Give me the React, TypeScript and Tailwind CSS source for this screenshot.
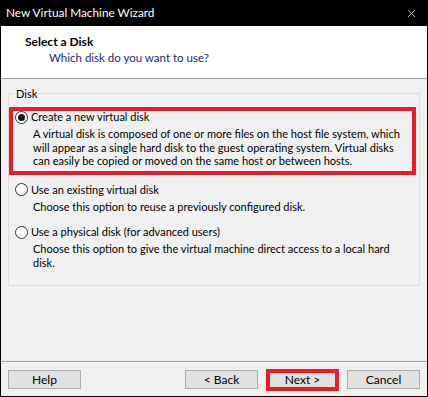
import { X } from "lucide-react";

const font = { fontFamily: 'Lato, "Noto Sans", sans-serif' };

function Radio({ checked }: { checked?: boolean }) {
  return (
    <span className="flex h-[13px] w-[13px] shrink-0 items-center justify-center rounded-full border border-[#333] bg-white">
      {checked && <span className="h-[7px] w-[7px] rounded-full bg-[#1a1a1a]" />}
    </span>
  );
}

function Option({
  label,
  desc,
  checked,
}: {
  label: string;
  desc: string[];
  checked?: boolean;
}) {
  return (
    <div className="flex flex-col">
      <div className="flex h-[12px] items-center gap-[3px]">
        <Radio checked={checked} />
        <span className="leading-[12px]">{label}</span>
      </div>
      <div className="ml-[18px] mt-[4px] leading-[13.5px]">
        {desc.map((d) => (
          <div key={d}>{d}</div>
        ))}
      </div>
    </div>
  );
}

function Btn({ children, red }: { children: string; red?: boolean }) {
  return (
    <button
      className={
        red
          ? "-mt-px h-[22px] w-[73px] border-4 border-[#ed1c24] bg-[#e1e1e1] text-[12px] leading-none text-black"
          : "h-[19px] w-[73px] border border-[#adadad] bg-[#e1e1e1] text-[12px] leading-none text-black"
      }
    >
      {children}
    </button>
  );
}

export default function App() {
  return (
    <div className="flex h-[397px] w-[428px] flex-col overflow-hidden whitespace-nowrap bg-[#f0f0f0] text-[11px] text-black" style={font}>
      {/* title bar */}
      <div className="flex h-[26px] shrink-0 items-center justify-between bg-black pl-[6px] pr-[10px] text-white">
        <span className="text-[11.8px]">New Virtual Machine Wizard</span>
        <X size={13} strokeWidth={1.3} />
      </div>
      <div className="flex flex-1 flex-col border-x border-b border-black">
        {/* header */}
        <div className="flex h-[53px] shrink-0 flex-col border-b border-[#a0a0a0] bg-white pl-[24px] pt-[8px]">
          <div className="text-[12px] font-bold leading-[16px]">Select a Disk</div>
          <div className="ml-[24px] text-[11.5px] leading-[16px] text-[#1c2b6e]">
            Which disk do you want to use?
          </div>
        </div>
        {/* body */}
        <div className="flex-1 px-[7px] pt-[8px]">
          <fieldset className="w-[412px] border border-[#dcdcdc] pb-[16px] pr-[3px]">
            <legend className="ml-[5px] px-[2px] leading-[13px]">Disk</legend>
            <div className="mt-[7px] flex flex-col">
              <div className="w-[407px] border-4 border-[#ed1c24] pb-[3px] pl-[2px]">
                <Option
                  checked
                  label="Create a new virtual disk"
                  desc={[
                    "A virtual disk is composed of one or more files on the host file system, which",
                    "will appear as a single hard disk to the guest operating system. Virtual disks",
                    "can easily be copied or moved on the same host or between hosts.",
                  ]}
                />
              </div>
              <div className="mt-[9px] flex flex-col gap-[13px] pl-[6px]">
                <Option
                  label="Use an existing virtual disk"
                  desc={["Choose this option to reuse a previously configured disk."]}
                />
                <Option
                  label="Use a physical disk (for advanced users)"
                  desc={[
                    "Choose this option to give the virtual machine direct access to a local hard",
                    "disk.",
                  ]}
                />
              </div>
            </div>
          </fieldset>
        </div>
        {/* footer */}
        <div className="flex h-[35px] shrink-0 items-start border-t border-[#a0a0a0] px-[7px] pt-[8px]">
          <Btn>Help</Btn>
          <div className="ml-auto flex gap-[8px]">
            <Btn>&lt; Back</Btn>
            <Btn red>Next &gt;</Btn>
            <Btn>Cancel</Btn>
          </div>
        </div>
      </div>
    </div>
  );
}
